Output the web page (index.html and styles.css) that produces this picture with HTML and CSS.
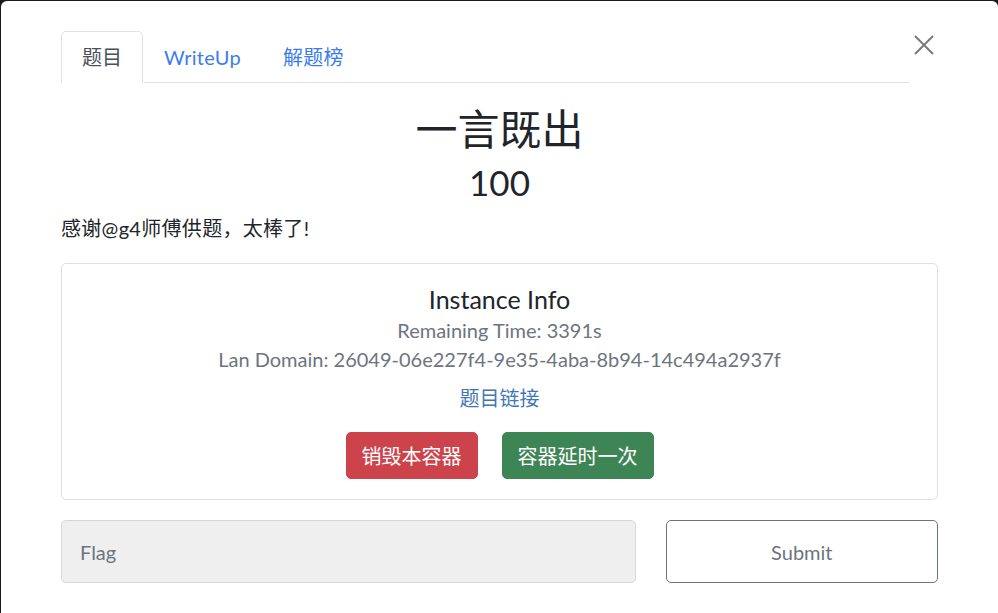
FILE: index.html
```html
<!DOCTYPE html>
<html lang="zh">
<head>
<meta charset="utf-8">
<title>一言既出</title>
<link rel="stylesheet" href="styles.css">
</head>
<body>
<div class="modal">
  <div class="header">
    <ul class="tabs">
      <li class="tab active">题目</li>
      <li class="tab">WriteUp</li>
      <li class="tab">解题榜</li>
    </ul>
    <button class="close" aria-label="Close">
      <svg width="20" height="20" viewBox="0 0 20 20"><path d="M1 1 L19 19 M19 1 L1 19" stroke="#7a7a7a" stroke-width="2" fill="none"/></svg>
    </button>
  </div>
  <h2 class="name">一言既出</h2>
  <h3 class="value">100</h3>
  <p class="desc">感谢@g4师傅供题，太棒了!</p>
  <div class="card">
    <h5 class="card-title">Instance Info</h5>
    <p class="muted first">Remaining Time: 3391s</p>
    <p class="muted">Lan Domain: 26049-06e227f4-9e35-4aba-8b94-14c494a2937f</p>
    <p class="link-row"><a class="link" href="#">题目链接</a></p>
    <div class="actions">
      <button class="btn danger">销毁本容器</button>
      <button class="btn success">容器延时一次</button>
    </div>
  </div>
  <div class="submit-row">
    <input class="flag" type="text" placeholder="Flag">
    <button class="submit">Submit</button>
  </div>
</div>
</body>
</html>
```
FILE: styles.css
```css
* { box-sizing: border-box; }
html, body { margin: 0; padding: 0; }
body {
  background: #1b1b1b;
  font-family: Lato, "Noto Sans CJK SC", sans-serif;
  font-size: 20px;
  line-height: 1.5;
  color: #212529;
  overflow: hidden;
}
.modal {
  margin: 1px 0 0 1px;
  background: #fff;
  border-radius: 6px 6px 0 0;
  min-height: 100vh;
  padding: 30px 60px 0 60px;
}
.header {
  display: flex;
  align-items: flex-start;
}
.tabs {
  list-style: none;
  margin: 0;
  padding: 0;
  display: flex;
  flex: 1;
  border-bottom: 1px solid #dee2e6;
}
.tab {
  padding: 10px 20px;
  line-height: 30px;
  color: #3a7cf0;
  border: 1px solid transparent;
  border-top-left-radius: 5px;
  border-top-right-radius: 5px;
  margin-bottom: -1px;
  letter-spacing: 0.3px;
}
.tab.active {
  color: #495057;
  border-color: #dee2e6 #dee2e6 #fff;
  background: #fff;
  letter-spacing: 0;
}
.close {
  width: 29px;
  padding: 0;
  margin-top: 4px;
  border: 0;
  background: none;
  display: flex;
  justify-content: center;
}
.name {
  margin: 21px 0 0;
  text-align: center;
  font-size: 42px;
  font-weight: 400;
  line-height: 1.2;
}
.value {
  margin: 7px 0 0;
  text-align: center;
  font-size: 35px;
  font-weight: 400;
  line-height: 1.2;
}
.desc {
  margin: 10px 0 20px;
  line-height: 30px;
  letter-spacing: 0.3px;
}
.card {
  border: 1px solid #e0e0e0;
  border-radius: 5px;
  padding: 20px 20px 20px;
  text-align: center;
}
.card-title {
  margin: 0;
  font-size: 25px;
  font-weight: 400;
  line-height: 30px;
}
.muted {
  margin: 0;
  color: #6c757d;
  line-height: 29px;
}
.muted.first { margin-top: 2px; }
.link-row {
  margin: 9px 0 0;
  line-height: 30px;
}
.link {
  color: #3f77b6;
  text-decoration: none;
}
.actions {
  margin-top: 19px;
  display: flex;
  justify-content: center;
  gap: 24px;
}
.btn {
  font-family: inherit;
  font-size: 20px;
  line-height: 30px;
  padding: 7.5px 15px;
  border: 1px solid transparent;
  border-radius: 5px;
  color: #fff;
}
.danger { background: #cc434b; border-color: #cc434b; }
.success { background: #3e8556; border-color: #3e8556; }
.submit-row {
  margin-top: 20px;
  display: flex;
  gap: 30px;
}
.flag {
  flex: 0 0 calc((100% + 30px) * 2 / 3 - 30px);
  height: 63px;
  padding: 0 18px;
  font-family: inherit;
  font-size: 20px;
  color: #495057;
  background: #efefef;
  border: 1px solid #d4d8dc;
  border-radius: 5px;
}
.flag::placeholder { color: #6c757d; }
.submit {
  flex: 1;
  height: 63px;
  font-family: inherit;
  font-size: 20px;
  color: #6c757d;
  background: #fff;
  border: 1px solid #6c757d;
  border-radius: 5px;
}
```
